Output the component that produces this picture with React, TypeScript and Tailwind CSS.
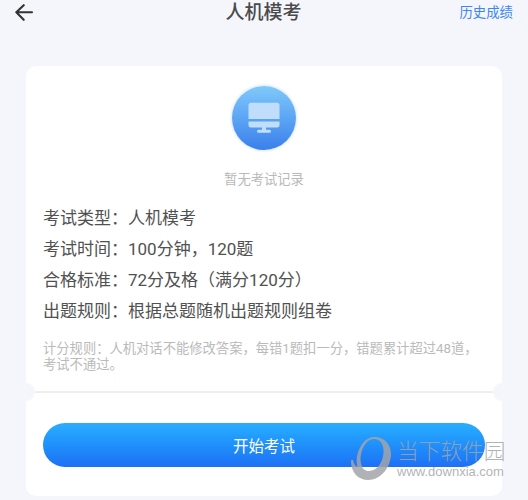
const details = [
	{ label: '考试类型', value: '人机模考' },
	{ label: '考试时间', value: '100分钟，120题' },
	{ label: '合格标准', value: '72分及格（满分120分）' },
	{ label: '出题规则', value: '根据总题随机出题规则组卷' },
];

function Header() {
	return (
		<header className="grid h-[25px] grid-cols-[1fr_auto_1fr] items-center pl-[14px] pr-[15px]">
			<svg
				width="20"
				height="18"
				viewBox="0 0 20 18"
				fill="none"
				stroke="#333336"
				strokeWidth="2.1"
				strokeLinecap="round"
				strokeLinejoin="round"
				aria-hidden="true"
			>
				<path d="M18 8.200H2.300M9.700 1.200 2.300 8.200l7.400 7.600" />
			</svg>
			<h1 className="pt-px text-[19px] font-medium leading-[24px] text-[#4a4a4c]">
				人机模考
			</h1>
			<a className="justify-self-end text-[13.4px] leading-[25px] text-[#3a86f5]">
				历史成绩
			</a>
		</header>
	);
}

function MonitorBadge() {
	return (
		<div className="flex size-[64px] items-center justify-center rounded-full bg-linear-to-b from-[#80c9fa] to-[#3b7fec] shadow-[0_0_3px_1px_#d9e7f5]">
			<svg
				width="32"
				height="32"
				viewBox="0 0 32 32"
				fill="#c0defb"
				aria-hidden="true"
			>
				<path d="M3 .7h26a2.500 2.500 0 0 1 2.500 2.500V17H.500V3.200A2.500 2.500 0 0 1 3 .7Z" />
				<path d="M.5 19.500h31v3.500a2.500 2.500 0 0 1-2.500 2.500H18v2.300h3.500a1.500 1.500 0 0 1 0 3h-11a1.500 1.500 0 0 1 0-3H14v-2.300H3A2.500 2.500 0 0 1 .5 23Z" />
			</svg>
		</div>
	);
}

function Watermark() {
	return (
		<div className="absolute left-[350px] top-[436px] flex text-[#a2a5a9]/85">
			<svg
				width="42"
				height="45"
				viewBox="0 0 42 45"
				fill="currentColor"
				aria-hidden="true"
			>
				<path
					fillRule="evenodd"
					d="M24 1C35 1 41.500 9 41 19 40 33 30 44 18 44 8 44 1 36 1 25.500 1 24 2 23.500 3 24c.5 3 2 6 4.500 7C4 18 13 1 24 1Zm0 2C15 3 9 17 11 27c1 6 4 8 8 8 8 0 14-9 14.500-18C34 8 30 3 24 3Z"
				/>
			</svg>
			<div className="pl-[5px]">
				<p className="font-['Noto_Sans_CJK_SC',sans-serif] text-[21.7px] font-light leading-[28px]">
					当下软件园
				</p>
				<p className="font-['Liberation_Sans',sans-serif] text-[13px] leading-[16px]">
					www.downxia.com
				</p>
			</div>
		</div>
	);
}

export default function App() {
	return (
		<div className="relative h-[500px] w-[528px] overflow-hidden bg-[#f5f6fb] font-[Roboto,'Noto_Sans_CJK_SC',sans-serif]">
			<Header />
			<main className="mx-[26px] mt-[41px] flex h-[430px] flex-col overflow-hidden rounded-[10px] bg-white">
				<section className="flex h-[317px] flex-col px-[17px] pt-5">
					<div className="flex flex-col items-center">
						<MonitorBadge />
						<p className="mt-[21px] text-[13.3px] leading-[18px] text-[#b9b9b9]">
							暂无考试记录
						</p>
					</div>
					<dl className="mt-[14px] text-[17px] leading-[31px] text-[#515151]">
						{details.map((item) => (
							<div key={item.label} className="flex">
								<dt>{item.label}：</dt>
								<dd>{item.value}</dd>
							</div>
						))}
					</dl>
					<p className="mt-[14px] text-[13.3px] leading-[15.5px] text-[#bababa]">
						计分规则：人机对话不能修改答案，每错1题扣一分，错题累计超过48道，考试不通过。
					</p>
				</section>
				<div className="-mx-[9px] flex h-[18px] shrink-0 items-center">
					<span className="size-[18px] rounded-full bg-[#f5f6fb]" />
					<span className="h-[2px] flex-1 bg-[#eeeeee]" />
					<span className="size-[18px] rounded-full bg-[#f5f6fb]" />
				</div>
				<section className="px-[17px] pt-[22px]">
					<button
						type="button"
						className="h-[44px] w-full rounded-full bg-linear-to-b from-[#29aeff] to-[#1f70f5] pt-[5px] text-[15.5px] text-white"
					>
						开始考试
					</button>
				</section>
			</main>
			<Watermark />
		</div>
	);
}
